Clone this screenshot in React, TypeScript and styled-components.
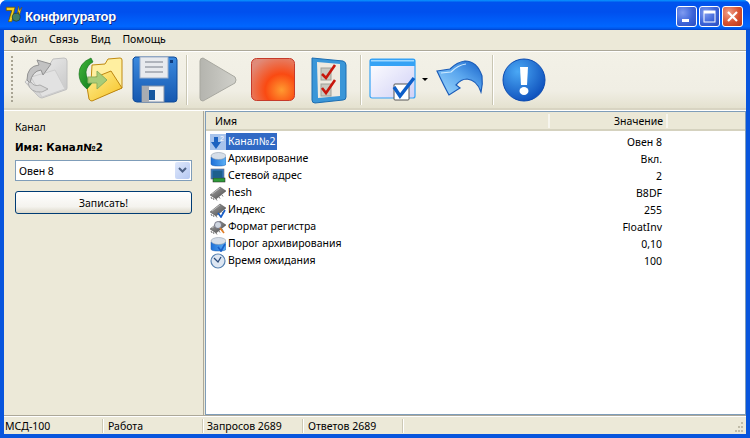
import React from "react";
import styled, { createGlobalStyle } from "styled-components";

const Global = createGlobalStyle`
  html, body { margin: 0; padding: 0; background: #fff; }
  * { box-sizing: border-box; }
  body { font-family: "Noto Sans", "DejaVu Sans", sans-serif; font-size: 10.5px; color: #000; }
`;

const Win = styled.div`
  width: 750px; height: 438px; display: flex; flex-direction: column;
  background: #0855dd; border-radius: 7px 7px 0 0; overflow: hidden;
`;
const Title = styled.div`
  height: 30px; flex: none; display: flex; align-items: center; padding: 0 7px 0 5px; gap: 2px;
  background: linear-gradient(180deg, #0997ff 0%, #0053ee 8%, #0050ee 40%, #0066ff 88%, #0055e8 96%, #0040c8 100%);
`;
const TitleText = styled.span`
  flex: 1; font: bold 13px "Liberation Sans", sans-serif; letter-spacing: -0.15px; color: #fff; text-shadow: 1px 1px 0 #0f2a8a; margin: 3px 0 0 0;
`;
const Caption = styled.div<{ $close?: boolean }>`
  width: 21px; height: 21px; border: 1px solid #fff; border-radius: 3px; margin-top: 2px;
  display: flex; align-items: center; justify-content: center;
  background: ${p => p.$close
    ? "radial-gradient(circle at 30% 30%, #f0a08a, #d8512f 55%, #b8361a)"
    : "radial-gradient(circle at 30% 30%, #7f9bf0, #3c64d8 55%, #2a4cc0)"};
`;
const Body = styled.div`
  flex: 1; min-height: 0; margin: 0 4px 4px; background: #ece9d8; display: flex; flex-direction: column;
`;
const Menu = styled.div`
  height: 20px; flex: none; display: flex; align-items: center; padding: 0 0 2px 6px; gap: 12px;
`;
const Toolbar = styled.div`
  height: 60px; flex: none; display: flex; align-items: center; padding: 0 0 0 7px;
  border-top: 1px solid #aca899; box-shadow: inset 0 1px 0 #fff;
  border-bottom: 2px solid #d8d4c2;
  background: linear-gradient(180deg, #f3f1e7 0%, #f0eee4 70%, #e4e1cf 100%);
`;
const Grip = styled.div`
  width: 2px; height: 48px; margin-right: 9px;
  background: repeating-linear-gradient(180deg, #a8a494 0 2px, transparent 2px 4px);
`;
const Sep = styled.div`
  width: 1px; height: 50px; background: #c9c6b3; box-shadow: 1px 0 0 #fff;
`;
const Tool = styled.div<{ $w: number; $ml: number }>`
  width: ${p => p.$w}px; height: 48px; margin-left: ${p => p.$ml}px; flex: none; display: flex; align-items: center;
`;
const Main = styled.div`
  flex: 1; min-height: 0; display: flex; border-top: 1px solid #fff;
`;
const Side = styled.div`
  width: 200px; flex: none; padding: 9px 11px 0 11px; display: flex; flex-direction: column; border-right: 1px solid #aca899;
`;
const SideLabel = styled.div`
  height: 14px; line-height: 14px;
`;
const NameLabel = styled.div`
  height: 14px; line-height: 14px; font-family: "DejaVu Sans", sans-serif; font-size: 10.3px; font-weight: bold; margin-top: 6px;
`;
const Combo = styled.div`
  height: 21px; margin-top: 6px; border: 1px solid #7f9db9; background: #fff; display: flex; align-items: center;
  justify-content: space-between; padding: 1px 1px 1px 3px;
`;
const ComboBtn = styled.div`
  width: 15px; height: 17px; border-radius: 2px; background: linear-gradient(135deg, #dfe8fb, #b5c8f2);
  display: flex; align-items: center; justify-content: center;
`;
const WriteBtn = styled.div`
  height: 23px; margin-top: 10px; border: 1px solid #003c74; border-radius: 3px;
  display: flex; align-items: center; justify-content: center;
  background: linear-gradient(180deg, #fff 0%, #f4f3ee 70%, #dcd8ca 100%);
`;
const List = styled.div`
  flex: 1; min-width: 0; background: #fff; border: 1px solid #7f9db9; display: flex; flex-direction: column; margin-left: 1px;
`;
const Head = styled.div`
  height: 19px; flex: none; display: flex; align-items: center; background: #ebe8d7;
  border-bottom: 2px solid #d5d2bf;
`;
const HeadCell = styled.div<{ $w: number; $right?: boolean }>`
  width: ${p => p.$w}px; height: 14px; line-height: 14px; flex: none; border-right: 2px solid #f6f5ee;
  padding: ${p => (p.$right ? "0 3px 0 0" : "0 0 0 9px")}; text-align: ${p => (p.$right ? "right" : "left")};
`;
const Rows = styled.div`
  padding-top: 2px; display: flex; flex-direction: column;
`;
const Row = styled.div`
  height: 17px; display: flex; align-items: center; padding-left: 4px;
`;
const RowIcon = styled.div`
  width: 16px; height: 16px; flex: none;
`;
const RowName = styled.div<{ $sel?: boolean }>`
  flex: none; width: 321px; height: 17px; line-height: 17px; display: flex;
  span { padding: 0 2px; background: ${p => (p.$sel ? "#316ac5" : "transparent")}; color: ${p => (p.$sel ? "#fff" : "#000")}; }
`;
const RowValue = styled.div`
  width: 115px; flex: none; text-align: right;
`;
const Status = styled.div`
  height: 19px; flex: none; display: flex; align-items: center; border-top: 1px solid #aca899; padding-top: 1px;
  box-shadow: inset 0 1px 0 #fff; background: #ece9d8; position: relative;
`;
const StatusCell = styled.div<{ $w: number; $pad: number }>`
  width: ${p => p.$w}px; height: 14px; line-height: 14px; flex: none; padding-left: ${p => p.$pad}px; border-right: 1px solid #cdc9b5;
  box-shadow: 1px 0 0 #fff; white-space: nowrap;
`;
const SizeGrip = styled.svg`
  position: absolute; right: 1px; bottom: 1px;
`;
const Page = styled.div`
  width: 750px; height: 438px; overflow: hidden;
`;

const Defs = () => (
  <svg width="0" height="0" style={{ position: "absolute" }}>
    <defs>
      <linearGradient id="g1" x1="0" y1="0" x2="1" y2="1"><stop offset="0" stopColor="#f4f4f4" /><stop offset="1" stopColor="#c4c4c4" /></linearGradient>
      <linearGradient id="folder" x1="0" y1="0" x2="1" y2="1"><stop offset="0" stopColor="#fff29a" /><stop offset="1" stopColor="#f6c020" /></linearGradient>
      <linearGradient id="green" x1="0" y1="0" x2="1" y2="1"><stop offset="0" stopColor="#44b83a" /><stop offset="1" stopColor="#0f7a1c" /></linearGradient>
      <linearGradient id="disk" x1="0" y1="0" x2="0" y2="1"><stop offset="0" stopColor="#3c8ade" /><stop offset="1" stopColor="#1558b0" /></linearGradient>
      <linearGradient id="play" x1="0" y1="0" x2="1" y2="0"><stop offset="0" stopColor="#b4b4ae" /><stop offset="1" stopColor="#d0d0ca" /></linearGradient>
      <radialGradient id="stop" cx="0.7" cy="0.75" r="0.85"><stop offset="0" stopColor="#ff9a30" /><stop offset="0.45" stopColor="#fa4a12" /><stop offset="1" stopColor="#e08a78" /></radialGradient>
      <linearGradient id="win" x1="0" y1="0" x2="1" y2="1"><stop offset="0" stopColor="#fff" /><stop offset="1" stopColor="#d0d0f6" /></linearGradient>
      <linearGradient id="undo" x1="0" y1="1" x2="1" y2="0"><stop offset="0" stopColor="#a0d8fc" /><stop offset="0.55" stopColor="#5aa6ee" /><stop offset="1" stopColor="#1560c8" /></linearGradient>
      <radialGradient id="info" cx="0.35" cy="0.3" r="0.8"><stop offset="0" stopColor="#4aa8f5" /><stop offset="1" stopColor="#0a4ab8" /></radialGradient>
      <linearGradient id="cyl" x1="0" y1="0" x2="1" y2="0"><stop offset="0" stopColor="#1f70d8" /><stop offset="1" stopColor="#5cb0f5" /></linearGradient>
      <linearGradient id="chip" x1="0" y1="0" x2="1" y2="1"><stop offset="0" stopColor="#a8a8a8" /><stop offset="1" stopColor="#4a4a4a" /></linearGradient>
    </defs>
  </svg>
);

const AppIcon = () => (
  <svg width="18" height="20" viewBox="0 0 16 18">
    <path d="M1 2h8l-3 13H3l3-10H1z" fill="#f5d020" stroke="#6b5200" strokeWidth=".7" />
    <circle cx="10" cy="11" r="3.6" fill="#3f7f6a" stroke="#1a3a30" strokeWidth=".6" />
    <path d="M12 1l1 4 2-3-2 7-1-3-1 2z" fill="#f5d020" stroke="#6b5200" strokeWidth=".5" />
  </svg>
);

const IOpen = () => (
  <svg width="46" height="48" viewBox="0 0 46 48">
    <path d="M18 9 L28 8 L31 3 L42 2 Q45 2 45 5 L45 32 Q45 34 43 34 L20 42 Q18 42 16 40 L3 26 Z" fill="url(#g1)" stroke="#c0c0c0" />
    <path d="M9 21 L33 14 L43 33 L20 41 Z" fill="#e2e2e2" stroke="#cdcdcd" />
    <path d="M5 24 Q5 10 17 9 L15 4 L29 8 L21 19 L19 14 Q10 15 8 27 Z" fill="#c2c2c2" stroke="#929292" />
    <path d="M6 27 Q8 37 20 36 L26 33 L18 29 Q12 31 9 26 Z" fill="#d6d6d6" stroke="#ababab" />
  </svg>
);
const IFolder = () => (
  <svg width="45" height="48" viewBox="0 0 45 48">
    <path d="M14 9 L27 8 L30 3 L42 2 Q44 2 44 4 L44 32 L12 44 Z" fill="#ffefa0" stroke="#c08a10" />
    <path d="M8 25 L33 15 L44 32 L14 45 Q12 45 11 43 Z" fill="url(#folder)" stroke="#bd8610" />
    <path d="M13 2 Q1 7 1 18 Q1 27 9 33 L14 27 Q8 23 8 16 Q9 9 15 6 Z" fill="url(#green)" stroke="#116a18" strokeWidth=".6" />
    <path d="M10 21 H19 V15 L29 24 L19 33 V27 H10 Z" fill="#a8cc78" stroke="#8bb060" />
  </svg>
);
const IDisk = () => (
  <svg width="46" height="48" viewBox="0 0 46 48">
    <path d="M3 1h39q3 0 3 3v39q0 3-3 3H5q-3 0-4-3V3z" fill="url(#disk)" stroke="#0f4a98" />
    <rect x="8" y="1" width="28" height="21" fill="#e8eaee" stroke="#9fb0c8" />
    <path d="M13 6h18M13 11h18M13 16h18" stroke="#b0b4bc" strokeWidth="2" />
    <rect x="38" y="4" width="3" height="3" fill="#0c3c80" />
    <rect x="10" y="30" width="22" height="16" fill="#f2f2f2" stroke="#8090a8" />
    <rect x="10" y="30" width="7" height="16" fill="#a8acb2" />
    <rect x="17" y="34" width="6" height="10" fill="#15569f" />
  </svg>
);
const IPlay = () => (
  <svg width="38" height="48" viewBox="0 0 38 48">
    <path d="M4 2 q-3 0-3 3v37 q0 3 3 3 l32-18 q2-3 0-6z" fill="url(#play)" stroke="#a8a8a0" />
  </svg>
);
const IStop = () => (
  <svg width="44" height="44" viewBox="0 0 44 44">
    <rect x=".5" y=".5" width="43" height="42" rx="5" fill="url(#stop)" stroke="#c63a2a" />
  </svg>
);
const ICheck = () => (
  <svg width="38" height="48" viewBox="0 0 38 48">
    <path d="M3 2 L34 5 q3 1 3 4 v32 q0 3-3 3 L6 47 q-3 0-3-3z" fill="#3a96d8" stroke="#1c6cb0" />
    <path d="M8 6 L31 8 v32 L9 42z" fill="#eeeae0" />
    <rect x="12" y="12" width="10" height="12" fill="#c8c8c0" stroke="#a0a098" />
    <rect x="12" y="28" width="10" height="12" fill="#c8c8c0" stroke="#a0a098" />
    <path d="M13 18l4 4 9-13M13 32l4 5 9-13" fill="none" stroke="#c8160c" strokeWidth="2.6" />
  </svg>
);
const IWin = () => (
  <svg width="48" height="48" viewBox="0 0 48 48">
    <rect x="1" y="3" width="45" height="39" rx="2" fill="url(#win)" stroke="#35a2f5" strokeWidth="1.2" />
    <rect x="1" y="3" width="45" height="7" fill="#35a2f5" />
    <rect x="2" y="4" width="43" height="1.5" fill="#9fd8ff" />
    <rect x="25" y="28" width="15" height="16" rx="1" fill="#fff" stroke="#555" />
    <path d="M25 31l6 9 14-18" fill="none" stroke="#0d5ec8" strokeWidth="3.4" />
  </svg>
);
const IDrop = () => (
  <svg width="6" height="4" viewBox="0 0 6 4" style={{ marginLeft: 1 }}><path d="M0 0h6l-3 3z" fill="#000" /></svg>
);
const IUndo = () => (
  <svg width="48" height="48" viewBox="0 0 48 48">
    <path d="M1 15 L14 13 Q21 6 29 5 Q41 5 46 20 Q47 28 45 36 Q41 24 31 23 Q25 23 20 29 L24 32 L13 39 Q8 30 1 15 Z" fill="url(#undo)" stroke="#1b5cb8" strokeWidth="1.2" />
    <path d="M5 17 L15 16 Q22 9 30 8" fill="none" stroke="#cfeaff" strokeWidth="1.2" />
  </svg>
);
const IInfo = () => (
  <svg width="44" height="44" viewBox="0 0 44 44">
    <circle cx="22" cy="22" r="21" fill="url(#info)" stroke="#0a4ab0" />
    <path d="M18 9h8l-1 18h-6z" fill="#fff" />
    <ellipse cx="22" cy="33" rx="4.5" ry="4" fill="#fff" />
  </svg>
);

const Cyl = () => (<>
  <path d="M1 6v7q0 2 7.500 2t7.500-2V6z" fill="url(#cyl)" stroke="#1a5cb0" strokeWidth=".5" />
  <ellipse cx="8.500" cy="5" rx="7.500" ry="3.500" fill="#d6dee8" stroke="#8090a0" strokeWidth=".5" />
</>);
const Chip = () => (<>
  <path d="M0 10 L10 2 L16 6 L6 14z" fill="url(#chip)" stroke="#333" strokeWidth=".4" />
  <path d="M1 12l1 2M3 13l1 2M6 14l1 1.500M9 12l1 1.500M12 10l1 1.500" stroke="#777" />
  <path d="M2 9l8-6" stroke="#ccc" strokeWidth=".8" />
</>);
const Tick = () => <path d="M8 11l3 4 4-7" fill="none" stroke="#1a5fc8" strokeWidth="1.7" />;

const rowIcons = [
  <svg width="16" height="16" viewBox="0 0 16 16" key="a"><rect width="16" height="16" fill="#a8c4ec" /><path d="M1 8h3V3h4v5h3l-5 7z" fill="#1c62c0" /><text x="10" y="7" fontSize="7" fontFamily="Liberation Sans" fill="#fff">2</text></svg>,
  <svg width="16" height="16" viewBox="0 0 16 16" key="b"><Cyl /></svg>,
  <svg width="16" height="16" viewBox="0 0 16 16" key="c"><rect x="1" y="1" width="13" height="10" fill="#3a7ec8" stroke="#667" strokeWidth=".6" /><rect x="2.500" y="2.500" width="10" height="7" fill="#1d5f8c" /><rect x="3" y="10" width="12" height="4" fill="#2f9a3a" stroke="#222" strokeWidth=".5" /></svg>,
  <svg width="16" height="16" viewBox="0 0 16 16" key="d"><Chip /></svg>,
  <svg width="16" height="16" viewBox="0 0 16 16" key="e"><Chip /><Tick /></svg>,
  <svg width="16" height="16" viewBox="0 0 16 16" key="f"><Chip /><circle cx="8" cy="6" r="3.500" fill="#cfd6e0" stroke="#667" strokeWidth=".8" /><path d="M10 9l4 5" stroke="#e07a20" strokeWidth="1.600" /></svg>,
  <svg width="16" height="16" viewBox="0 0 16 16" key="g"><Cyl /><Tick /></svg>,
  <svg width="16" height="16" viewBox="0 0 16 16" key="h"><circle cx="8" cy="8" r="7" fill="#dde6f2" stroke="#5580b0" strokeWidth="1.200" /><path d="M4 5l4 4 3-5" fill="none" stroke="#2a4a78" strokeWidth="1.300" /></svg>,
];

const rows: [string, string][] = [
  ["Канал№2", "Овен 8"],
  ["Архивирование", "Вкл."],
  ["Сетевой адрес", "2"],
  ["hesh", "B8DF"],
  ["Индекс", "255"],
  ["Формат регистра", "FloatInv"],
  ["Порог архивирования", "0,10"],
  ["Время ожидания", "100"],
];

export default function App() {
  return (
    <Page>
      <Global />
      <Defs />
      <Win>
        <Title>
          <AppIcon />
          <TitleText>Конфигуратор</TitleText>
          <Caption><svg width="13" height="13" viewBox="0 0 13 13"><rect x="2" y="9" width="7" height="3" fill="#fff" /></svg></Caption>
          <Caption><svg width="13" height="13" viewBox="0 0 13 13"><rect x="1" y="1" width="11" height="11" fill="none" stroke="#fff" /><rect x="1" y="1" width="11" height="2.500" fill="#fff" /></svg></Caption>
          <Caption $close><svg width="13" height="13" viewBox="0 0 13 13"><path d="M2 2l9 9M11 2l-9 9" stroke="#fff" strokeWidth="2.200" /></svg></Caption>
        </Title>
        <Body>
          <Menu><span>Файл</span><span>Связь</span><span>Вид</span><span>Помощь</span></Menu>
          <Toolbar>
            <Grip />
            <Tool $w={46} $ml={0}><IOpen /></Tool>
            <Tool $w={45} $ml={10}><IFolder /></Tool>
            <Tool $w={46} $ml={9}><IDisk /></Tool>
            <Tool $w={1} $ml={8}><Sep /></Tool>
            <Tool $w={38} $ml={12}><IPlay /></Tool>
            <Tool $w={44} $ml={14}><IStop /></Tool>
            <Tool $w={38} $ml={14}><ICheck /></Tool>
            <Tool $w={1} $ml={13}><Sep /></Tool>
            <Tool $w={48} $ml={8}><IWin /></Tool>
            <Tool $w={12} $ml={4}><IDrop /></Tool>
            <Tool $w={48} $ml={3}><IUndo /></Tool>
            <Tool $w={1} $ml={8}><Sep /></Tool>
            <Tool $w={44} $ml={9}><IInfo /></Tool>
          </Toolbar>
          <Main>
            <Side>
              <SideLabel>Канал</SideLabel>
              <NameLabel>Имя: Канал№2</NameLabel>
              <Combo>
                Овен 8
                <ComboBtn><svg width="9" height="7" viewBox="0 0 9 7"><path d="M1 1l3.500 3.500L8 1" fill="none" stroke="#4d6185" strokeWidth="2" /></svg></ComboBtn>
              </Combo>
              <WriteBtn>Записать!</WriteBtn>
            </Side>
            <List>
              <Head>
                <HeadCell $w={344}>Имя</HeadCell>
                <HeadCell $w={118} $right>Значение</HeadCell>
              </Head>
              <Rows>
                {rows.map(([n, v], i) => (
                  <Row key={n}>
                    <RowIcon>{rowIcons[i]}</RowIcon>
                    <RowName $sel={i === 0}><span>{n}</span></RowName>
                    <RowValue>{v}</RowValue>
                  </Row>
                ))}
              </Rows>
            </List>
          </Main>
          <Status>
            <StatusCell $w={99} $pad={1}>МСД-100</StatusCell>
            <StatusCell $w={100} $pad={5}>Работа</StatusCell>
            <StatusCell $w={100} $pad={4}>Запросов 2689</StatusCell>
            <StatusCell $w={100} $pad={5}>Ответов 2689</StatusCell>
            <SizeGrip width="12" height="12" viewBox="0 0 12 12">
              <path d="M8 1h2v2H8zM5 5h2v2H5zM8 5h2v2H8zM2 9h2v2H2zM5 9h2v2H5zM8 9h2v2H8z" fill="#c0bca8" />
            </SizeGrip>
          </Status>
        </Body>
      </Win>
    </Page>
  );
}
